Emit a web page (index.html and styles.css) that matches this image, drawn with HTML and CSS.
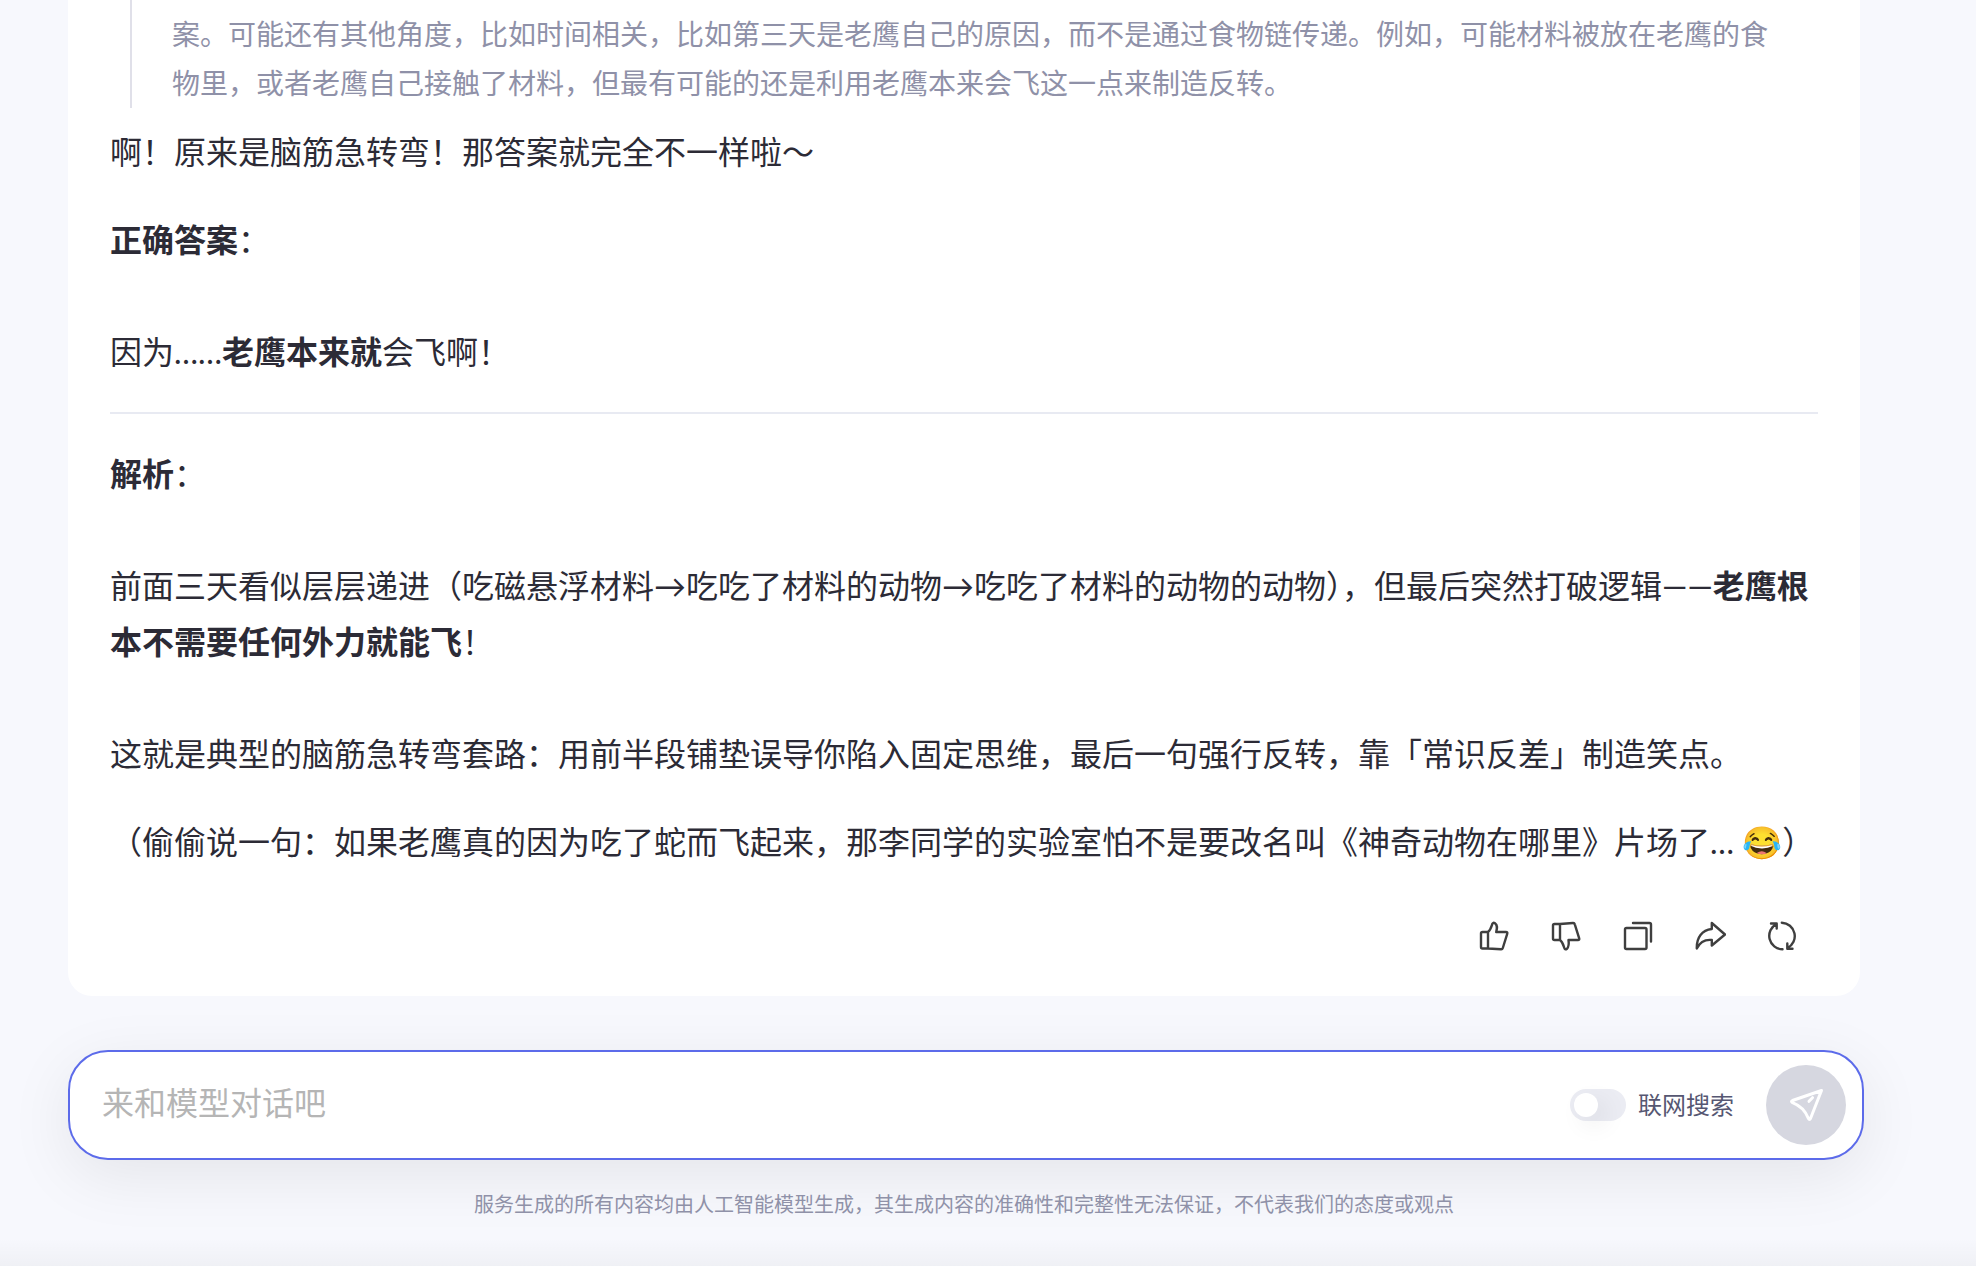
FILE: index.html
```
<!DOCTYPE html>
<html lang="zh-CN">
<head>
    <meta charset="UTF-8">
    <meta name="viewport" content="width=device-width, initial-scale=1.0">
    <title>模型对话</title>
    <link rel="stylesheet" href="styles.css">
</head>
<body>
    <main class="chat">
        <article class="message">
            <blockquote class="thinking">案。可能还有其他角度，比如时间相关，比如第三天是老鹰自己的原因，而不是通过食物链传递。例如，可能材料被放在老鹰的食物里，或者老鹰自己接触了材料，但最有可能的还是利用老鹰本来会飞这一点来制造反转。</blockquote>

            <div class="answer">
                <p>啊！原来是脑筋急转弯！那答案就完全不一样啦～</p>
                <p><strong>正确答案</strong>：<br><br>因为……<strong>老鹰本来就</strong>会飞啊！</p>
                <hr>
                <p><strong>解析</strong>：<br><br>前面三天看似层层递进（吃磁悬浮材料→吃吃了材料的动物→吃吃了材料的动物的动物），但最后突然打破逻辑——<strong>老鹰根本不需要任何外力就能飞</strong>！<br><br>这就是典型的脑筋急转弯套路：用前半段铺垫误导你陷入固定思维，最后一句强行反转，靠「常识反差」制造笑点。</p>
                <p>（偷偷说一句：如果老鹰真的因为吃了蛇而飞起来，那李同学的实验室怕不是要改名叫《神奇动物在哪里》片场了… 😂）</p>
            </div>

            <div class="actions">
                <button type="button" class="action-btn" aria-label="赞">
                    <svg viewBox="0 0 32 32"><path d="M10 12H4.500Q3 12 3 13.500V27Q3 28.500 4.500 28.500H10ZM10 12C12.500 10 13.300 7 14.300 4Q15 2 17 3.300C20 5.500 19 8.500 18.200 12H28Q29.800 12 29.200 13.800L24.800 28Q24.400 29.400 23 29.300L10 28.500"/></svg>
                </button>
                <button type="button" class="action-btn" aria-label="踩">
                    <svg viewBox="0 0 32 32"><path d="M10 4H4.500Q3 4 3 5.500V18.500Q3 20 4.500 20H10ZM10 4L23 3Q24.400 2.900 24.800 4.300L29.200 18.300Q29.700 20 28 20H18.500C19 23.500 19 26.500 17 28.700Q15 30.200 14.300 28C13.300 25 12.800 22 10 20"/></svg>
                </button>
                <button type="button" class="action-btn" aria-label="复制">
                    <svg viewBox="0 0 32 32"><rect x="3" y="8" width="21.500" height="21" rx="1.500"/><path d="M11 3H27.500Q29 3 29 4.500V21.500"/></svg>
                </button>
                <button type="button" class="action-btn" aria-label="分享">
                    <svg viewBox="0 0 32 32"><path d="M17.800 3L31 14.500L17.800 25.500V20C11 19.300 6 22 2.800 28.500C2.500 17.500 8 10 17.800 9Z"/></svg>
                </button>
                <button type="button" class="action-btn" aria-label="重新生成">
                    <svg viewBox="0 0 32 32"><path d="M16.500 29.300A13.400 13.400 0 0 1 10.500 4M5 3.500H10.700V8.500M15.800 2.700A13.400 13.400 0 0 1 21.500 28M21.300 23.500V28.800H26.500"/></svg>
                </button>
            </div>
        </article>

        <form class="composer">
            <input type="text" class="composer-input" placeholder="来和模型对话吧" aria-label="来和模型对话吧">
            <label class="search-toggle">
                <input type="checkbox" class="switch">
                联网搜索
            </label>
            <button type="submit" class="send-btn" aria-label="发送">
                <svg viewBox="0 0 40 40"><path d="M35.500 5.500L6.500 15.500Q4.500 16.500 6.500 17.600Q18 22 22.300 33.300Q23.500 35.500 24.600 33.300ZM26.500 12.700L23 16.300"/></svg>
            </button>
        </form>

        <p class="disclaimer">服务生成的所有内容均由人工智能模型生成，其生成内容的准确性和完整性无法保证，不代表我们的态度或观点</p>
    </main>
</body>
</html>
```
FILE: styles.css
```
/* Base styles */
* {
    margin: 0;
    padding: 0;
    box-sizing: border-box;
}

body {
    background-color: #f7f8fd;
    color: #2c2b36;
    font-family: "Lato", "Inter", "Noto Sans CJK SC", sans-serif;
}

button,
input {
    font-family: inherit;
    border: none;
    outline: none;
}

svg {
    display: block;
    fill: none;
    stroke: currentColor;
    stroke-linecap: round;
    stroke-linejoin: round;
}

.chat {
    min-height: 100vh;
    padding: 0 112px 0 68px;
    background: linear-gradient(to top, rgba(0, 0, 0, 0.03), transparent 28px);
}

/* Message card */
.message {
    margin-right: 4px;
    padding: 0 42px 44px;
    background: #ffffff;
    border-radius: 0 0 24px 24px;
}

.thinking {
    margin: 0 40px 16px 20px;
    padding: 10px 0 0 40px;
    border-left: 2px solid #e0e0e9;
    color: #8f91a8;
    font-size: 28px;
    line-height: 49px;
}

.answer {
    display: flex;
    flex-direction: column;
    gap: 32px;
    font-size: 32px;
    line-height: 56px;
}

.answer strong {
    font-weight: 700;
}

.answer hr {
    border: none;
    border-top: 2px solid #e8eaf2;
}

.actions {
    display: flex;
    justify-content: flex-end;
    gap: 40px;
    margin-top: 50px;
    padding-right: 20px;
}

.action-btn {
    width: 32px;
    height: 32px;
    background: none;
    color: #3f3f3f;
    stroke-width: 2.4;
    cursor: pointer;
}

/* Input bar */
.composer {
    display: flex;
    align-items: center;
    height: 110px;
    margin-top: 54px;
    padding: 0 16px 0 32px;
    background: #ffffff;
    border: 2px solid #5c6bea;
    border-radius: 40px;
    box-shadow: 0 16px 64px rgba(0, 0, 0, 0.08);
}

.composer-input {
    flex: 1;
    min-width: 0;
    height: 64px;
    padding-bottom: 6px;
    background: transparent;
    color: #2c2b36;
    font-size: 32px;
}

.composer-input::placeholder {
    color: #b5b5b5;
}

.search-toggle {
    display: flex;
    align-items: center;
    gap: 12px;
    margin-right: 32px;
    color: #565772;
    font-size: 24px;
    line-height: 32px;
    cursor: pointer;
}

.switch {
    appearance: none;
    width: 56px;
    height: 32px;
    padding: 4px;
    background: #ebecf3;
    border-radius: 16px;
}

.switch::before {
    content: "";
    display: block;
    width: 24px;
    height: 24px;
    background: #ffffff;
    border-radius: 50%;
    box-shadow: 8px 8px 24px rgba(0, 0, 0, 0.08);
}

.switch:checked {
    background: #5c6bea;
}

.switch:checked::before {
    margin-left: 24px;
}

.send-btn {
    display: flex;
    align-items: center;
    justify-content: center;
    width: 80px;
    height: 80px;
    background: #d6d7e0;
    border-radius: 50%;
    color: #ffffff;
    stroke-width: 3;
    cursor: pointer;
}

.send-btn svg {
    width: 40px;
    height: 40px;
}

.disclaimer {
    margin: 30px 4px 0 0;
    color: #8f91a8;
    font-size: 20px;
    line-height: 28px;
    text-align: center;
}
```
